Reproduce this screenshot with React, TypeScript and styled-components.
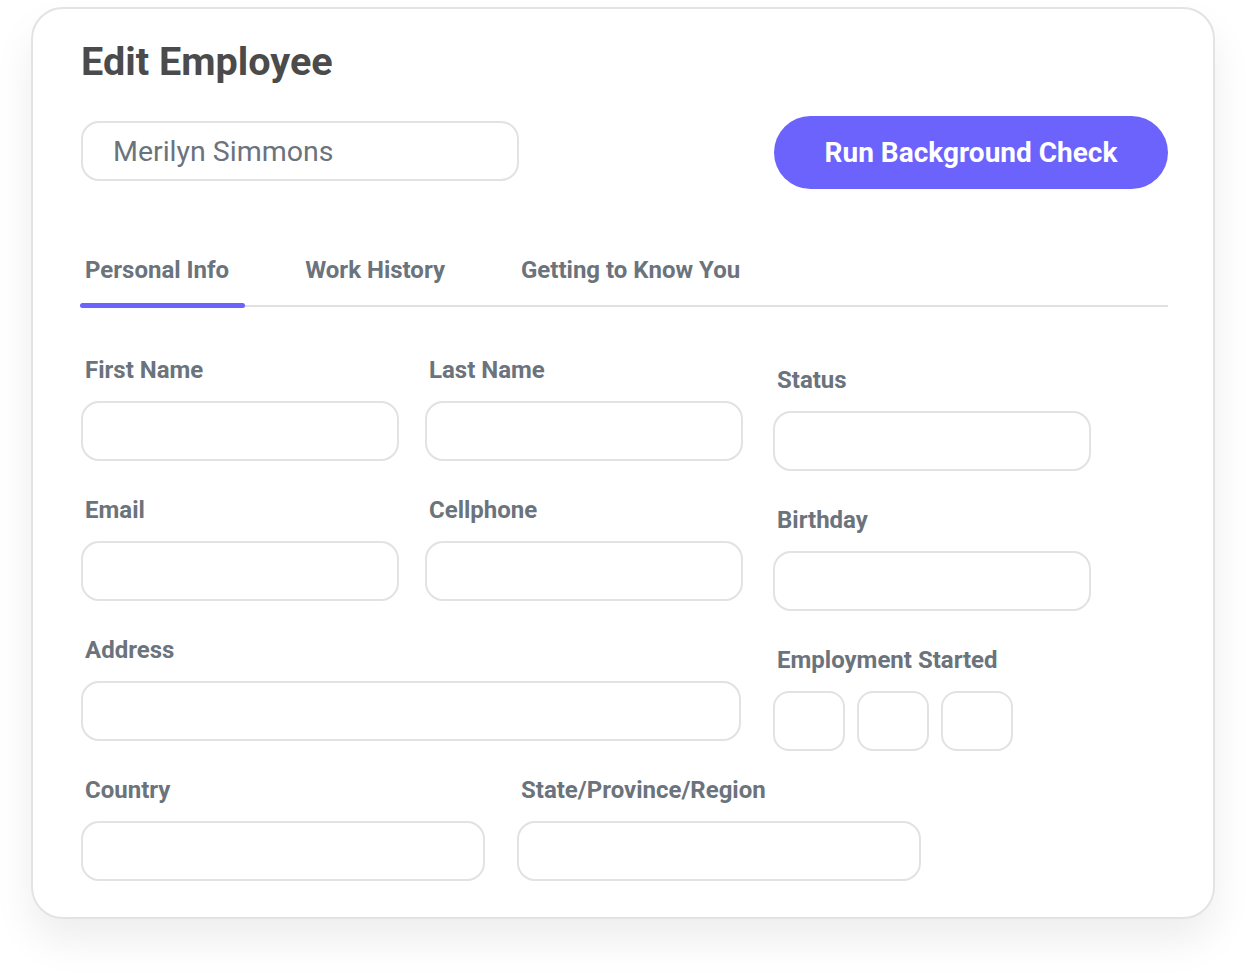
import React, { useState } from 'react';
import styled, { createGlobalStyle } from 'styled-components';

const GlobalStyle = createGlobalStyle`
  html, body {
    margin: 0;
    padding: 0;
    background: #ffffff;
  }
  body {
    font-family: Roboto, "Liberation Sans", Arial, sans-serif;
  }
  * {
    box-sizing: border-box;
  }
`;

const COLORS = {
  title: '#4b4b4b',
  label: '#6b737c',
  border: '#e2e2e2',
  primary: '#6c63fd',
};

const TABS = ['Personal Info', 'Work History', 'Getting to Know You'];

const App = () => {
  const [activeTab, setActiveTab] = useState(0);

  return (
    <Page>
      <GlobalStyle />
      <Card>
        <Title>Edit Employee</Title>
        <TopRow>
          <NameInput defaultValue="Merilyn Simmons" />
          <CheckButton>Run Background Check</CheckButton>
        </TopRow>

        <TabList>
          {TABS.map((tab, i) => (
            <Tab key={tab} $active={i === activeTab} onClick={() => setActiveTab(i)}>
              {tab}
            </Tab>
          ))}
        </TabList>

        <FormGrid>
          <Field>
            <Label>First Name</Label>
            <TextInput />
          </Field>
          <Field>
            <Label>Last Name</Label>
            <TextInput />
          </Field>
          <Field $shifted>
            <Label>Status</Label>
            <TextInput />
          </Field>

          <Field>
            <Label>Email</Label>
            <TextInput />
          </Field>
          <Field>
            <Label>Cellphone</Label>
            <TextInput />
          </Field>
          <Field $shifted>
            <Label>Birthday</Label>
            <TextInput />
          </Field>

          <Field $span={2}>
            <Label>Address</Label>
            <TextInput $width={660} />
          </Field>
          <Field $shifted>
            <Label>Employment Started</Label>
            <DateRow>
              <DateBox />
              <DateBox />
              <DateBox />
            </DateRow>
          </Field>
        </FormGrid>

        <BottomRow>
          <Field>
            <Label>Country</Label>
            <TextInput $width={404} />
          </Field>
          <Field>
            <Label>State/Province/Region</Label>
            <TextInput $width={404} />
          </Field>
        </BottomRow>
      </Card>
    </Page>
  );
};

const Page = styled.div`
  width: 1246px;
  min-height: 973px;
  padding: 7px 31px 0;
`;

const Card = styled.div`
  width: 1184px;
  border: 2px solid #e3e3e3;
  border-radius: 32px;
  background: #ffffff;
  padding: 31px 45px 36px 48px;
  box-shadow: 0 22px 40px rgba(0, 0, 0, 0.07);
`;

const Title = styled.h1`
  margin: 0;
  font-size: 39.6px;
  line-height: 44px;
  font-weight: 700;
  color: ${COLORS.title};
`;

const TopRow = styled.div`
  display: flex;
  justify-content: space-between;
  align-items: center;
  margin-top: 32px;
`;

const NameInput = styled.input`
  width: 438px;
  height: 60px;
  border: 2px solid ${COLORS.border};
  border-radius: 18px;
  padding: 0 0 0 30px;
  font-family: Roboto, "Liberation Sans", Arial, sans-serif;
  font-size: 28.5px;
  color: #6b737c;
  background: #ffffff;
  margin-top: -3px;
  :focus-visible {
    outline: none;
  }
`;

const CheckButton = styled.button`
  width: 394px;
  height: 73px;
  border: none;
  border-radius: 37px;
  background: ${COLORS.primary};
  color: #ffffff;
  font-family: Roboto, "Liberation Sans", Arial, sans-serif;
  font-size: 28px;
  font-weight: 700;
  cursor: pointer;
`;

const TabList = styled.div`
  display: flex;
  gap: 56px;
  margin-top: 68px;
  border-bottom: 2px solid #e0e0e0;
`;

const Tab = styled.div<{ $active?: boolean }>`
  position: relative;
  padding: 0 16px 22px 4px;
  font-size: 24px;
  line-height: 26px;
  font-weight: 700;
  color: ${COLORS.label};
  cursor: pointer;

  &::after {
    content: '';
    display: ${(p) => (p.$active ? 'block' : 'none')};
    position: absolute;
    left: -1px;
    right: 0;
    bottom: -3px;
    height: 5px;
    border-radius: 3px;
    background: ${COLORS.primary};
  }
`;

const FormGrid = styled.div`
  display: grid;
  grid-template-columns: 318px 318px 322px;
  column-gap: 26px;
  row-gap: 36px;
  margin-top: 50px;
`;

const Field = styled.div<{ $shifted?: boolean; $span?: number }>`
  display: flex;
  flex-direction: column;
  grid-column: ${(p) => (p.$span ? `span ${p.$span}` : 'auto')};
  margin-top: ${(p) => (p.$shifted ? '10px' : '0')};
  margin-bottom: ${(p) => (p.$shifted ? '-10px' : '0')};
  padding-left: ${(p) => (p.$shifted ? '4px' : '0')};
`;

const Label = styled.label`
  display: block;
  padding-left: 4px;
  margin-bottom: 18px;
  font-size: 24px;
  line-height: 26px;
  font-weight: 700;
  color: ${COLORS.label};
  white-space: nowrap;
`;

const TextInput = styled.input<{ $width?: number }>`
  width: ${(p) => (p.$width ? `${p.$width}px` : '318px')};
  height: 60px;
  border: 2px solid ${COLORS.border};
  border-radius: 18px;
  background: #ffffff;
  padding: 0 20px;
  font-family: Roboto, "Liberation Sans", Arial, sans-serif;
  font-size: 20px;
  color: ${COLORS.label};
  :focus-visible {
    outline: none;
  }
`;

const DateRow = styled.div`
  display: flex;
  gap: 12px;
`;

const DateBox = styled.input`
  width: 72px;
  height: 60px;
  border: 2px solid ${COLORS.border};
  border-radius: 16px;
  background: #ffffff;
  padding: 0 8px;
  text-align: center;
  font-family: Roboto, "Liberation Sans", Arial, sans-serif;
  font-size: 20px;
  color: ${COLORS.label};
  :focus-visible {
    outline: none;
  }
`;

const BottomRow = styled.div`
  display: flex;
  gap: 32px;
  margin-top: 36px;
`;

export default App;
